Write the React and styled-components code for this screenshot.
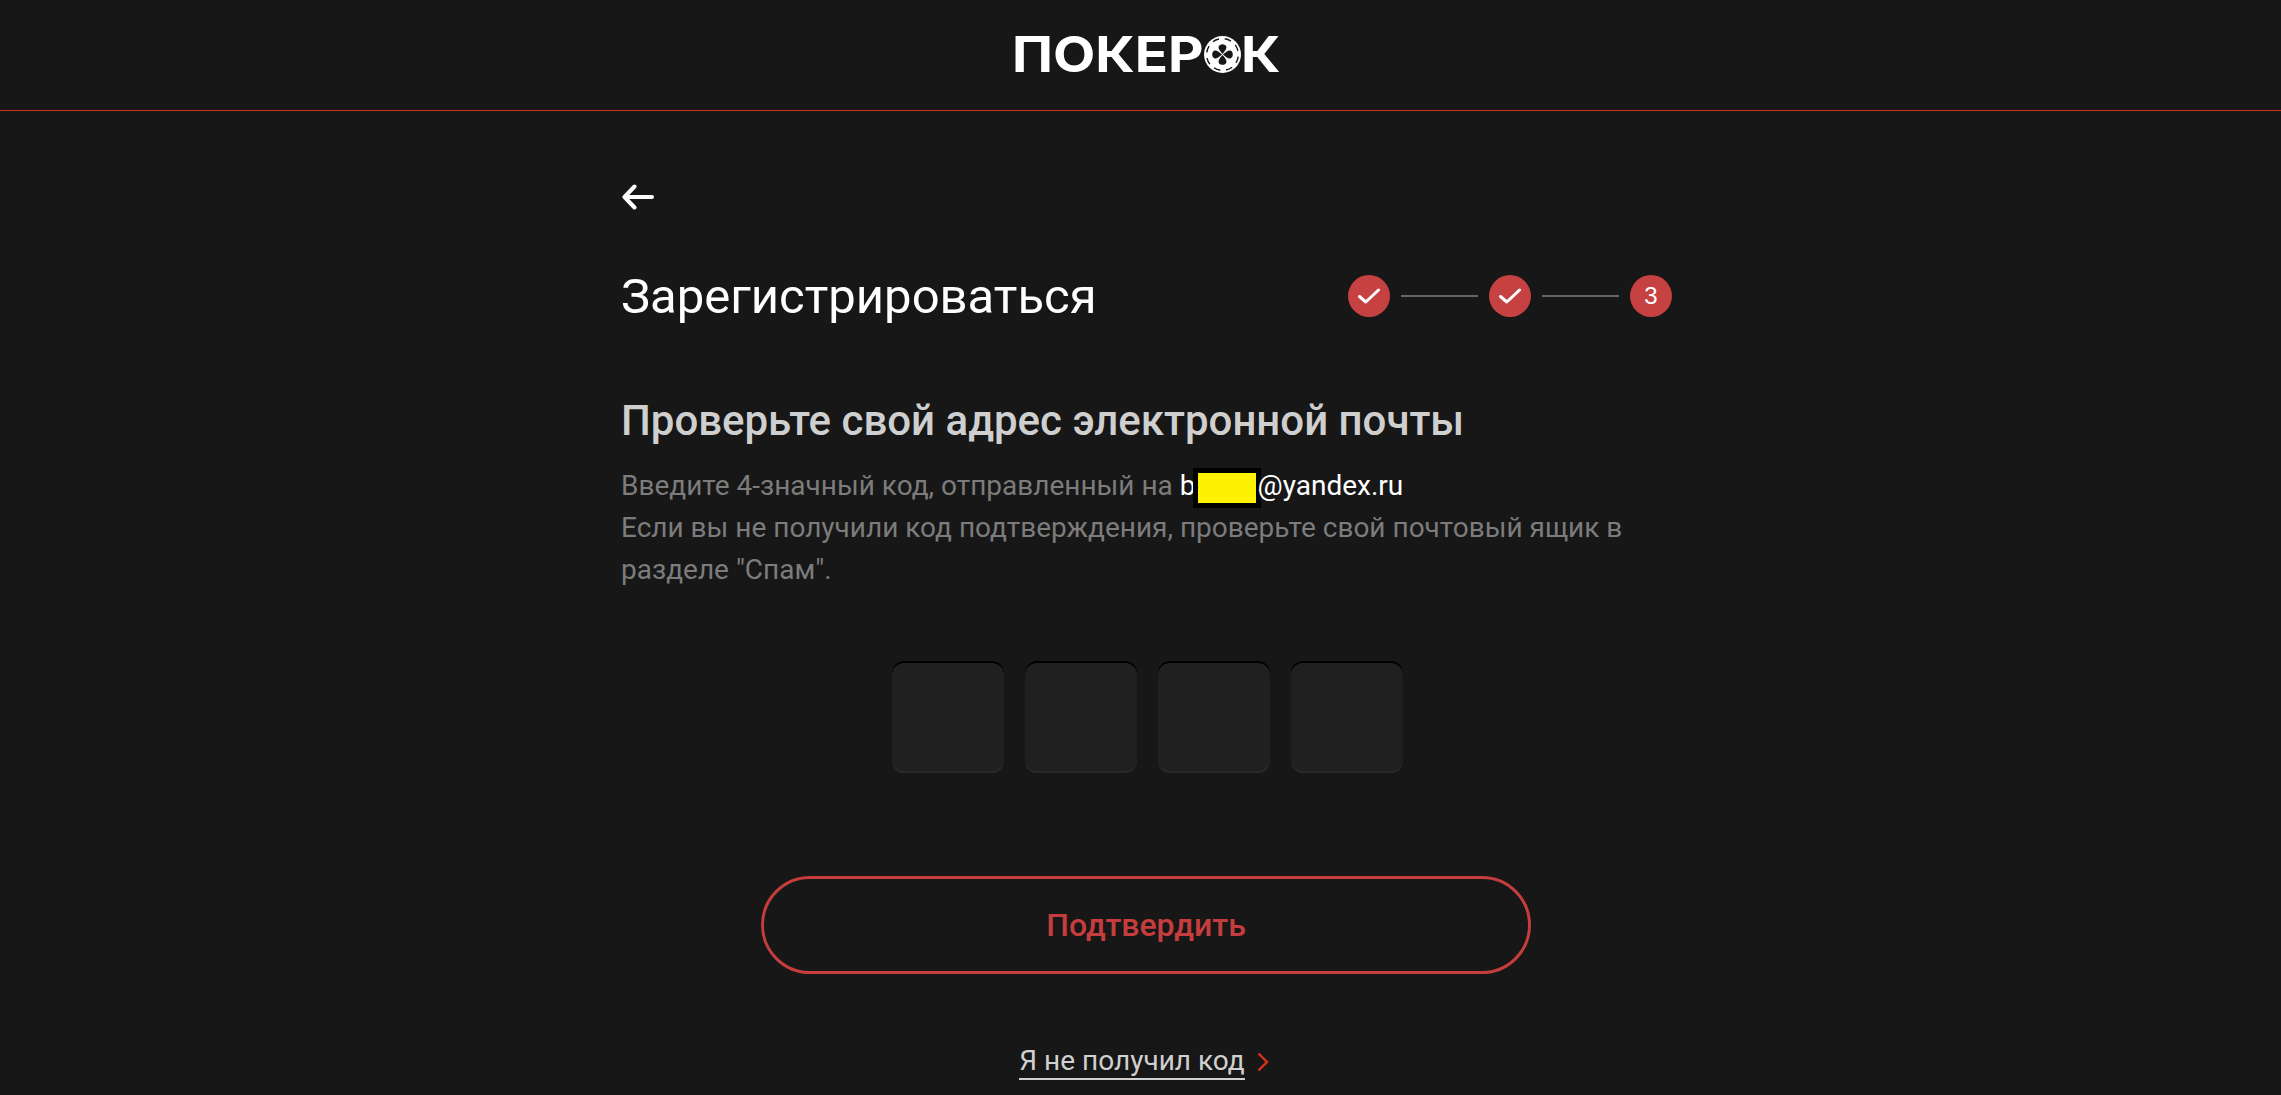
import React from 'react';
import styled, { createGlobalStyle } from 'styled-components';

const Global = createGlobalStyle`
  html, body { margin: 0; padding: 0; background: #171717; height: 100%; overflow: hidden; }
  body { font-family: Roboto, "Liberation Sans", sans-serif; }
`;
const Page = styled.div`height: 1095px; overflow: hidden; background: #171717; color: #fff;`;
const Header = styled.header`
  height: 110px; border-bottom: 1px solid #d5301f; display: flex; align-items: center; justify-content: center;
  padding-left: 11px;
`;
const Logo = styled.div`display: flex; align-items: center; width: 268px; height: 37px; margin-top: -2px;`;
const LogoText = styled.span`
  font-family: Inter, sans-serif; font-weight: 700; font-size: 49px; line-height: 37px; color: #fff;
  white-space: nowrap; display: inline-block; transform-origin: left center; transform: scaleX(1.12);
  width: ${p => p.$width}px; flex: none;
`;
const Main = styled.main`
  width: 1051px; margin: 0 0 0 621px; padding: 73px 0 0 0;
  display: flex; flex-direction: column;
`;
const BackButton = styled.button`
  all: unset; display: block; width: 33px; height: 26px; line-height: 0; margin-left: 1px;
`;
const TitleRow = styled.div`display: flex; align-items: center; justify-content: space-between; margin-top: 65px; height: 44px;`;
const Title = styled.h1`margin: 0; font-size: 49px; font-weight: 400; line-height: 44px; color: #fff;`;
const Steps = styled.div`display: flex; align-items: center; gap: 11px; margin-top: -2px;`;
const StepDot = styled.div`
  width: 42px; height: 42px; border-radius: 50%; background: #c64142; color: #fff;
  display: flex; align-items: center; justify-content: center; font-size: 24px; font-family: "Liberation Sans", sans-serif;
`;
const StepLine = styled.div`width: 77px; height: 2px; background: #666;`;
const Subtitle = styled.h2`margin: 80px 0 0; font-size: 42px; line-height: 44px; font-weight: 500; color: #cfcfcf;`;
const Text = styled.p`margin: 22px 0 0; font-size: 28px; line-height: 42px; color: #7c7c7c;`;
const Email = styled.span`color: #fff;`;
const Redact = styled.span`
  display: inline-block; width: 58px; height: 30px; background: #fff200; border: 5px solid #000; vertical-align: -5px;
  margin: -8px -3px -8px -3px;
`;
const CodeRow = styled.div`display: flex; gap: 21px; margin: 70px 0 0 271px;`;
const CodeBox = styled.div`
  width: 112px; height: 112px; box-sizing: border-box; border-radius: 12px; background: #202020;
  box-shadow: inset 0 2px 0 #000, inset 0 -2px 0 #2a2a2a;
`;
const Confirm = styled.button`
  display: block; width: 770px; height: 98px; box-sizing: border-box; margin: 103px 0 0 140px; border: 3px solid #c63d3e; border-radius: 49px;
  background: transparent; color: #c63d3e; font-family: Roboto, sans-serif; font-size: 32px; font-weight: 500;
`;
const LinkRow = styled.div`display: flex; justify-content: center; align-items: center; gap: 11px; margin-top: 70px; padding-right: 4px;`;
const LinkText = styled.a`
  font-size: 28px; line-height: 34px; color: #d0d0d0; border-bottom: 2px solid #d0d0d0; display: block;
`;

const Check = () => (
  <svg width="22" height="16" viewBox="0 0 22 16" fill="none"><path d="M1.5 8.5 L7.8 14 L20.5 2" stroke="#fff" strokeWidth="3" strokeLinecap="round" strokeLinejoin="round" /></svg>
);
const Chip = () => {
  const dashes = [0, 45, 90, 135, 180, 225, 270, 315];
  return (
    <svg width="37" height="37" viewBox="0 0 37 37" style={{ flex: 'none' }}>
      <circle cx="18.5" cy="18.5" r="18.5" fill="#fff" />
      {dashes.map(a => (
        <path key={a} d="M18.5 2.6 A15.9 15.9 0 0 1 25 4" stroke="#171717" strokeWidth="1.4" fill="none" transform={`rotate(${a + 8} 18.5 18.5)`} />
      ))}
      {[0, 90, 180, 270].map(a => (
        <path key={a} d="M18.5 18 C15.5 14.5 14.2 12.5 14.6 10.8 C15 9 16.8 8.2 18.5 8.2 C20.2 8.2 22 9 22.4 10.8 C22.8 12.5 21.5 14.5 18.5 18 Z" fill="#171717" transform={`rotate(${a} 18.5 18.5)`} />
      ))}
    </svg>
  );
};

export default function App() {
  return (
    <Page>
      <Global />
      <Header>
        <Logo>
          <LogoText $width={192}>ПОКЕР</LogoText>
          <Chip />
          <LogoText $width={39}>К</LogoText>
        </Logo>
      </Header>
      <Main>
        <BackButton aria-label="Назад">
          <svg width="33" height="26" viewBox="0 0 33 26" fill="none">
            <path d="M12.5 2.5 L2.5 13 L12.5 23.5 M3 13 H30" stroke="#fff" strokeWidth="4" strokeLinecap="round" strokeLinejoin="round" />
          </svg>
        </BackButton>
        <TitleRow>
          <Title>Зарегистрироваться</Title>
          <Steps>
            <StepDot><Check /></StepDot>
            <StepLine />
            <StepDot><Check /></StepDot>
            <StepLine />
            <StepDot>3</StepDot>
          </Steps>
        </TitleRow>
        <Subtitle>Проверьте свой адрес электронной почты</Subtitle>
        <Text>
          Введите 4-значный код, отправленный на <Email>b<Redact />@yandex.ru</Email><br />
          Если вы не получили код подтверждения, проверьте свой почтовый ящик в разделе "Спам".
        </Text>
        <CodeRow>
          <CodeBox /><CodeBox /><CodeBox /><CodeBox />
        </CodeRow>
        <Confirm>Подтвердить</Confirm>
        <LinkRow>
          <LinkText>Я не получил код</LinkText>
          <svg width="14" height="20" viewBox="0 0 14 20" fill="none"><path d="M2.5 1.5 L11 10 L2.5 18.5" stroke="#d9301e" strokeWidth="2.4" /></svg>
        </LinkRow>
      </Main>
    </Page>
  );
}
